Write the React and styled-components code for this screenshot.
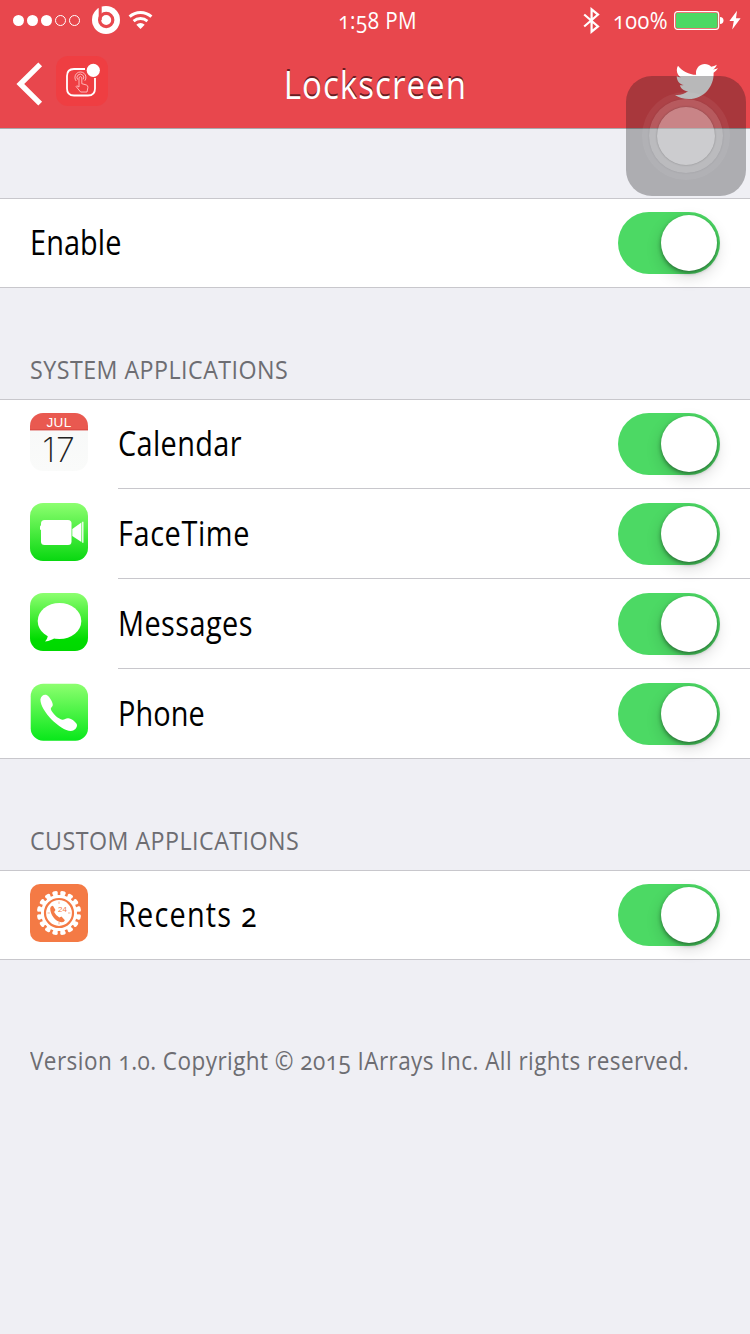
import React from 'react';
import styled, { createGlobalStyle } from 'styled-components';
import { FaTwitter } from 'react-icons/fa';

const GlobalStyle = createGlobalStyle`
  body {
    margin: 0;
    background: #efeff4;
    font-family: 'Open Sans', 'Noto Sans', sans-serif;
    font-variant-numeric: oldstyle-nums;
  }
`;

const Screen = styled.div`
  width: 750px;
  height: 1334px;
  overflow: hidden;
  background: #efeff4;
  color: #000;
`;

const Label = styled.span`
  display: block;
  white-space: nowrap;
  font-size: ${(p) => p.$size || 34}px;
  line-height: ${(p) => p.$line || 48}px;
  letter-spacing: ${(p) => p.$spacing ?? 0.5}px;
  transform: scaleX(${(p) => p.$narrow || 0.85});
  transform-origin: ${(p) => p.$origin || 'left'} center;
`;

const Header = styled.header`
  height: 128px;
  background: #e8474d;
  border-bottom: 1px solid #a9a9ac;
  color: #fff;
`;

const StatusBar = styled.div`
  display: grid;
  grid-template-columns: 1fr 100px 1fr;
  align-items: center;
  height: 40px;
`;

const StatusLeft = styled.div`
  display: flex;
  align-items: center;
  padding-left: 12px;
  svg {
    display: block;
  }
`;

const StatusTime = styled.div`
  display: flex;
  justify-content: center;
  padding: 1px 0 0 5px;
`;

const StatusRight = styled(StatusLeft)`
  justify-content: flex-end;
  padding: 0 9px 0 0;
`;

const PercentBox = styled.div`
  width: 55px;
  margin-left: 12px;
  padding-top: 1px;
`;

const NavBar = styled.div`
  display: grid;
  grid-template-columns: 1fr 240px 1fr;
  align-items: center;
  height: 88px;
`;

const NavLeft = styled.div`
  display: flex;
  align-items: flex-start;
  gap: 13px;
  padding-left: 16px;
  height: 56px;
  svg {
    display: block;
  }
`;

const NavRight = styled.div`
  display: flex;
  justify-content: flex-end;
  padding: 0 32px 5px 0;
`;

const Title = styled.h1`
  margin: 0;
  display: flex;
  justify-content: center;
  font-weight: 400;
  text-shadow: 0 -2px 0 rgba(60, 15, 20, 0.75);
`;

const Section = styled.section`
  padding-top: ${(p) => p.$top}px;
`;

const SectionHeader = styled.h2`
  margin: 0;
  padding-left: 30px;
  height: 54px;
  font-weight: 400;
  color: #6d6d72;
`;

const List = styled.div`
  background: #fff;
  border-top: 1px solid #c8c7cc;
  border-bottom: 1px solid #c8c7cc;
`;

const Row = styled.div`
  display: flex;
  padding-left: 30px;
`;

const RowIcon = styled.div`
  width: 88px;
  padding-top: ${(p) => (p.$first ? 13 : 14)}px;
  svg {
    display: block;
  }
`;

const RowBody = styled.div`
  flex: 1;
  display: flex;
  align-items: center;
  justify-content: space-between;
  height: 88px;
  padding: ${(p) => (p.$first ? 0 : 1)}px 30px 0 0;
  border-bottom: ${(p) => (p.$divider ? '1px solid #c8c7cc' : 'none')};
`;

const RowLabel = styled(Label)`
  padding-bottom: 3px;
`;

const Track = styled.div`
  display: flex;
  justify-content: flex-end;
  box-sizing: border-box;
  width: 102px;
  height: 62px;
  padding: 3px;
  border-radius: 31px;
  background: #4cd964;
`;

const Knob = styled.div`
  width: 56px;
  height: 56px;
  border-radius: 50%;
  background: #fff;
  box-shadow: 0 6px 16px rgba(0, 0, 0, 0.16), 0 2px 4px rgba(0, 0, 0, 0.42);
`;

const Footer = styled.p`
  margin: 0;
  padding: 76px 0 0 30px;
  color: #6d6d72;
`;

// floating system button, sits over everything
const AssistiveTouch = styled.div`
  position: absolute;
  left: 626px;
  top: 76px;
  display: grid;
  place-items: center;
  width: 120px;
  height: 120px;
  border-radius: 26px;
  background: rgba(20, 20, 22, 0.3);
`;

const Ring = styled.div`
  display: grid;
  place-items: center;
  width: ${(p) => p.$size}px;
  height: ${(p) => p.$size}px;
  border-radius: 50%;
  background: rgba(255, 255, 255, ${(p) => p.$alpha});
  box-shadow: 0 0 2px rgba(0, 0, 0, ${(p) => p.$shade || 0});
`;

const SignalDots = () => (
  <svg width="70" height="12" viewBox="0 0 70 12">
    {[0, 1, 2, 3, 4].map((i) => (
      <circle
        key={i}
        cx={6.5 + i * 14}
        cy="6.5"
        r={i < 3 ? 5.5 : 5}
        fill={i < 3 ? '#fff' : 'none'}
        stroke={i < 3 ? 'none' : '#fff'}
        strokeWidth="1"
      />
    ))}
  </svg>
);

const BeatsSvg = styled.svg`
  margin-left: 10px;
`;

const BeatsIcon = () => (
  <BeatsSvg width="28" height="28" viewBox="0 0 28 28">
    <circle cx="14" cy="14" r="14" fill="#fff" />
    <path d="M8.2 0.5V14" stroke="#e8474d" strokeWidth="3" fill="none" />
    <circle cx="14.2" cy="14" r="6.6" fill="none" stroke="#e8474d" strokeWidth="3.2" />
  </BeatsSvg>
);

const WifiSvg = styled.svg`
  margin-left: 8px;
`;

const WifiIcon = () => (
  <WifiSvg width="26" height="20" viewBox="0 0 26 20">
    <path d="M1.6 6.6a16.2 16.2 0 0 1 21.8 0" fill="none" stroke="#fff" strokeWidth="3" />
    <path d="M5.6 11.1a10.4 10.4 0 0 1 13.8 0" fill="none" stroke="#fff" strokeWidth="2.8" />
    <path d="M12.5 19 8.3 14.7a6 6 0 0 1 8.4 0z" fill="#fff" />
  </WifiSvg>
);

const BluetoothIcon = () => (
  <svg width="18" height="27" viewBox="0 0 18 27">
    <path d="M1.2 7.5 15 19.4 8.6 24.7V2.3L15 7.6 1.2 19.5" fill="none" stroke="#fff" strokeWidth="2.2" />
  </svg>
);

const BatterySvg = styled.svg`
  margin-left: 6px;
`;

const BatteryIcon = () => (
  <BatterySvg width="50" height="20" viewBox="0 0 50 20">
    <rect x="0.65" y="1.7" width="44" height="17.6" rx="2.8" fill="none" stroke="#fff" strokeWidth="1.2" />
    <rect x="2" y="3" width="41.5" height="15" rx="1.4" fill="#4cd964" />
    <path d="M46 7a3.4 3.4 0 0 1 0 7z" fill="#fff" />
  </BatterySvg>
);

const BoltSvg = styled.svg`
  margin-left: 5px;
`;

const BoltIcon = () => (
  <BoltSvg width="12" height="20" viewBox="0 0 12 20">
    <path d="M8 0.8.4 11h4.4L3.2 19.4 11.6 8.2H7z" fill="#fff" />
  </BoltSvg>
);

const BackSvg = styled.svg`
  margin-top: 6px;
`;

const BackIcon = () => (
  <BackSvg width="27" height="44" viewBox="0 0 27 44">
    <path d="M24.2 2.4 4.3 22l19.9 19.6" fill="none" stroke="#fff" strokeWidth="5.4" />
  </BackSvg>
);

const AppLogo = () => (
  <svg width="52" height="50" viewBox="0 0 52 50">
    <rect width="52" height="50" rx="12" fill="#ef3e42" />
    <path
      d="M29 13H18q-7 0-7 7v12.5q0 7 7 7h14q7 0 7-7V22"
      fill="none"
      stroke="#fff"
      strokeWidth="1.8"
    />
    <circle cx="37.3" cy="14.3" r="6.6" fill="#fff" />
    <g fill="none" stroke="#ffc4c4" strokeWidth="0.9">
      <path d="M20.2 25a5.5 5.5 0 1 1 8.6-.2" />
      <path d="M21.7 23.6a3.4 3.4 0 1 1 5.5-.2" />
      <path d="M23 31v-9.5q1.4-1.8 2.8 0v6.2l4.4 1.2q2 .6 1.7 2.6l-.9 4.5h-6.4l-4.5-5.4q0-1.8 2.9.4z" />
    </g>
  </svg>
);

const Gradient = ({ id, from, to }) => (
  <linearGradient id={id} x1="0" y1="0" x2="0" y2="1">
    <stop offset="0" stopColor={from} />
    <stop offset="1" stopColor={to} />
  </linearGradient>
);

const IconText = styled.text`
  font-variant-numeric: lining-nums;
  font-family: 'Liberation Sans', sans-serif;
`;

const DayText = styled(IconText)`
  font-family: Inter, 'Liberation Sans', sans-serif;
  font-weight: 200;
  font-kerning: none;
`;

const CalendarIcon = () => (
  <svg width="58" height="58" viewBox="0 0 58 58">
    <defs>
      <Gradient id="cal" from="#f7f8f8" to="#fafbfa" />
      <clipPath id="calClip">
        <rect width="58" height="58" rx="13" />
      </clipPath>
    </defs>
    <g clipPath="url(#calClip)">
      <rect width="58" height="58" fill="url(#cal)" />
      <rect width="58" height="17" fill="#e95950" />
      <rect y="16.4" width="58" height="1" fill="#d8453f" />
    </g>
    <IconText x="29" y="14" textAnchor="middle" fontSize="13.5" letterSpacing="0.4" fill="#fff">
      JUL
    </IconText>
    <DayText x="29" y="49" textAnchor="middle" fontSize="34" letterSpacing="1" fill="#222">
      17
    </DayText>
  </svg>
);

const FaceTimeIcon = () => (
  <svg width="58" height="58" viewBox="0 0 58 58">
    <defs>
      <Gradient id="facetime" from="#8dff70" to="#08d810" />
    </defs>
    <rect width="58" height="58" rx="13" fill="url(#facetime)" />
    <rect x="11" y="17" width="30.5" height="25" rx="3.5" fill="#fff" />
    <rect x="10" y="22.5" width="3" height="4.5" rx="1" fill="#fff" />
    <path d="M42.3 26 51.4 19.5v19.500l-9.100-6z" fill="#fff" />
    <path d="M52.8 18.7v21" stroke="#fff" strokeWidth="1.3" />
  </svg>
);

const MessagesIcon = () => (
  <svg width="58" height="58" viewBox="0 0 58 58">
    <defs>
      <linearGradient id="messages" x1="0" y1="0" x2="0" y2="1">
        <stop offset="0" stopColor="#8dff70" />
        <stop offset="0.8" stopColor="#00dc00" />
        <stop offset="1" stopColor="#00d800" />
      </linearGradient>
    </defs>
    <rect width="58" height="58" rx="13" fill="url(#messages)" />
    <ellipse cx="29.5" cy="28" rx="21.8" ry="18" fill="#fff" />
    <path d="M18 41c0 3-1.2 5.6-3 7.6 4.5-.4 8-2 10-4z" fill="#fff" />
  </svg>
);

const PhoneIcon = () => (
  <svg width="58" height="58" viewBox="0 0 58 58">
    <defs>
      <Gradient id="phone" from="#8dff70" to="#08e81a" />
    </defs>
    <rect x="0.7" y="0.7" width="57.3" height="57" rx="12.5" fill="url(#phone)" />
    <path
      d="M10.4 16.5C11 13 14 11 17 12.2c3 1.8 6.4 7.8 5.7 10.3-.5 1.6-1.900 2-1.900 3.500 1.200 4.200 7.600 10 11.500 10.800 2.200.3 3.400-1.800 6-1.500 3 .3 8.700 4.300 8.700 6.800 0 3.300-2.600 5.800-6.200 5.900C30 47.500 10.500 28 10.400 16.500z"
      fill="#fff"
    />
  </svg>
);

const teeth = Array.from({ length: 16 }, (_, i) => i * 22.5 + 11.25);

const RecentsIcon = () => (
  <svg width="58" height="58" viewBox="0 0 58 58">
    <rect width="58" height="58" rx="10" fill="#f47a45" />
    <g fill="#fff">
      <circle cx="29" cy="29" r="18" />
      {teeth.map((angle) => (
        <path
          key={angle}
          d="M25.6 12.5 26.9 10.4l-.7-1.300q-.3-2 1.500-2.200h2.600q1.800.2 1.500 2.200l-.7 1.300 1.300 2.100z"
          transform={`rotate(${angle} 29 29)`}
        />
      ))}
    </g>
    <circle cx="29" cy="29" r="14" fill="none" stroke="#f47a45" strokeWidth="2.2" />
    <path d="M29 17.5v2.4M29 38v2.4M17.5 29h2.4M38 29h2.4" stroke="#f9b393" strokeWidth="1" />
    <path
      d="M20.2 24.200q.2-2.200 2.700-2.400l2.600 4.200-1.400 2.100q1.900 3.800 5.200 5.500l2.200-1 3.400 3.600q-.9 2.400-3.300 2.100C25 37.500 20.200 30.500 20.200 24.200z"
      fill="#f47a45"
    />
    <IconText x="28" y="28" fontSize="8" fill="#f47a45">
      24
    </IconText>
  </svg>
);

const Switch = () => (
  <Track role="switch" aria-checked="true">
    <Knob />
  </Track>
);

const AppRow = ({ label, icon, spacing, first, last }) => (
  <Row>
    {icon && <RowIcon $first={first}>{icon}</RowIcon>}
    <RowBody $first={first} $divider={!last}>
      <RowLabel $spacing={spacing}>{label}</RowLabel>
      <Switch />
    </RowBody>
  </Row>
);

const systemApps = [
  { label: 'Calendar', icon: <CalendarIcon />, spacing: 0.4 },
  { label: 'FaceTime', icon: <FaceTimeIcon />, spacing: 0.7 },
  { label: 'Messages', icon: <MessagesIcon />, spacing: 0.5 },
  { label: 'Phone', icon: <PhoneIcon />, spacing: 0.1 },
];

const App = () => (
  <Screen>
    <GlobalStyle />
    <Header>
      <StatusBar>
        <StatusLeft>
          <SignalDots />
          <BeatsIcon />
          <WifiIcon />
        </StatusLeft>
        <StatusTime>
          <Label $size={23.5} $line={39} $narrow={0.88} $origin="center">
            1:58 PM
          </Label>
        </StatusTime>
        <StatusRight>
          <BluetoothIcon />
          <PercentBox>
            <Label $size={23.5} $line={39} $narrow={0.92}>
              100%
            </Label>
          </PercentBox>
          <BatteryIcon />
          <BoltIcon />
        </StatusRight>
      </StatusBar>
      <NavBar>
        <NavLeft>
          <BackIcon />
          <AppLogo />
        </NavLeft>
        <Title>
          <Label $size={38} $spacing={1.2} $narrow={0.87} $origin="center">
            Lockscreen
          </Label>
        </Title>
        <NavRight>
          <FaTwitter size={43} />
        </NavRight>
      </NavBar>
    </Header>
    <Section $top={69}>
      <List>
        <AppRow label="Enable" spacing={0.1} first last />
      </List>
    </Section>
    <Section $top={57}>
      <SectionHeader>
        <Label $size={25} $narrow={0.93}>
          SYSTEM APPLICATIONS
        </Label>
      </SectionHeader>
      <List>
        {systemApps.map((app, i) => (
          <AppRow key={app.label} {...app} first={i === 0} last={i === systemApps.length - 1} />
        ))}
      </List>
    </Section>
    <Section $top={57}>
      <SectionHeader>
        <Label $size={25} $narrow={0.93}>
          CUSTOM APPLICATIONS
        </Label>
      </SectionHeader>
      <List>
        <AppRow label="Recents 2" icon={<RecentsIcon />} spacing={1.4} first last />
      </List>
    </Section>
    <Footer>
      <Label $size={25} $narrow={0.9}>
        Version 1.0. Copyright © 2015 IArrays Inc. All rights reserved.
      </Label>
    </Footer>
    <AssistiveTouch>
      <Ring $size={88} $alpha={0.06}>
        <Ring $size={74} $alpha={0.13} $shade={0.12}>
          <Ring $size={58} $alpha={0.26} $shade={0.3} />
        </Ring>
      </Ring>
    </AssistiveTouch>
  </Screen>
);

export default App;
